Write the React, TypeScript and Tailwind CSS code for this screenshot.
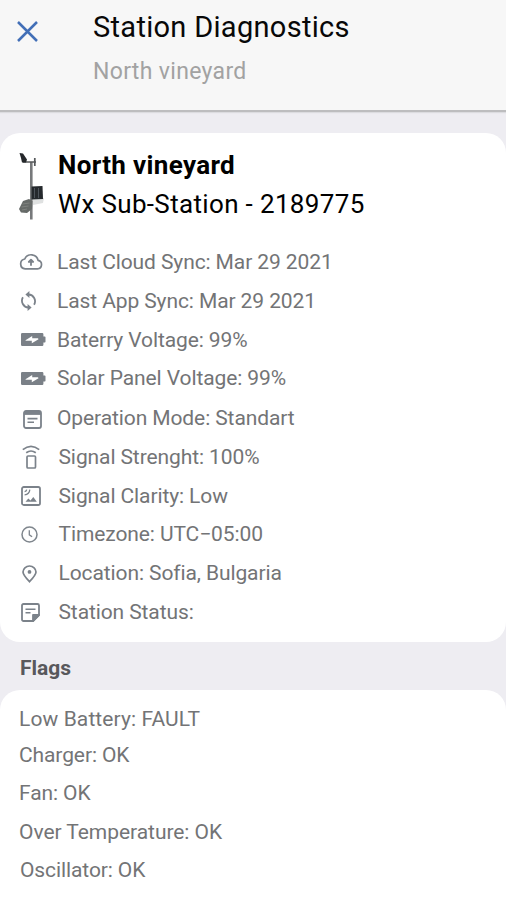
/* =============================================================
   Station Diagnostics screen
   Header, station card with device details, list of flags
   ============================================================= */

import type { ReactNode } from "react";

function CloudIcon() {
  return (
    <svg width="24" height="17" viewBox="0 0 24 17" fill="none" stroke="#7b828a" strokeWidth="1.7" strokeLinejoin="round">
      <path d="M6.2 15.9h12.3a4.3 4.3 0 0 0 .6-8.5A7 7 0 0 0 5.8 6a5 5 0 0 0 .4 9.9Z" />
      <path d="M12 12.8V7M9.8 8.9 12 6.6l2.2 2.3Z" fill="#7b828a" strokeWidth="1.8" />
    </svg>
  );
}

function SyncIcon() {
  return (
    <svg width="17" height="20" viewBox="0 0 17 20" fill="none" stroke="#7b828a" strokeWidth="1.8">
      <path d="M8.5 3.5a6.8 6.8 0 0 1 5.6 10.2M8.5 16.5A6.8 6.8 0 0 1 2.9 6.3" />
      <path d="M9.4 0v7L5.4 3.5ZM7.6 20v-7l4 3.5Z" fill="#7b828a" stroke="none" />
    </svg>
  );
}

function BatteryIcon() {
  return (
    <svg width="25" height="13" viewBox="0 0 25 13">
      <path d="M1.2 0h20a1.2 1.2 0 0 1 1.2 1.2v2.2h1.1c.7 0 1 .3 1 1v4.2c0 .7-.3 1-1 1h-1.1v2.2a1.2 1.2 0 0 1-1.2 1.2h-20A1.2 1.2 0 0 1 0 11.8V1.2A1.2 1.2 0 0 1 1.2 0Z" fill="#7a8087" />
      <path d="m4.500 7.200 6.700-4.200v2.300h5.800l.5 1-6.700 4V7.800H4.700Z" fill="#fff" />
    </svg>
  );
}

function ModeIcon() {
  return (
    <svg width="19" height="19" viewBox="0 0 19 19" fill="none" stroke="#7b828a" strokeWidth="1.8">
      <rect x="1" y="1" width="17" height="17" rx="2" />
      <path d="M1 3h17" strokeWidth="3.8" />
      <path d="M4.5 8.6h10M4.5 12.2h6.5" strokeWidth="1.6" />
    </svg>
  );
}

function SignalIcon() {
  return (
    <svg width="18" height="24" viewBox="0 0 18 24" fill="none" stroke="#7b828a" strokeWidth="1.7">
      <path d="M.8 4.6Q9-2 17.2 4.6M4.2 7.8q4.8-3.6 9.6 0" />
      <rect x="5" y="11" width="8.5" height="12" rx="1" />
    </svg>
  );
}

function ClarityIcon() {
  return (
    <svg width="20" height="20" viewBox="0 0 20 20" fill="none" stroke="#7b828a" strokeWidth="1.8">
      <rect x="1" y="1" width="18" height="18" rx="1.8" />
      <path d="M3.6 8.8q4.8-.4 5.2-5.2M3.6 5.7q1.8-.2 2.1-2.1" strokeWidth="1.3" />
      <path d="m4.5 15.8 2.8-3.4 2.2 2.2 2.8-3.6 3.5 4.8Z" fill="#7b828a" stroke="none" />
    </svg>
  );
}

function ClockIcon() {
  return (
    <svg width="17" height="17" viewBox="0 0 17 17" fill="none" stroke="#7f868d" strokeWidth="1.5">
      <circle cx="8.5" cy="8.5" r="7.5" />
      <path d="M8.3 4.2v4.6l2.8 2" strokeWidth="1.3" />
    </svg>
  );
}

function PinIcon() {
  return (
    <svg width="15" height="18" viewBox="0 0 15 18" fill="none" stroke="#7b828a" strokeWidth="1.7">
      <path d="M7.5 16.7C4 13 1 9.8 1 7a6.5 6 0 0 1 13 0c0 2.8-3 6-6.5 9.7Z" />
      <circle cx="7.5" cy="6.9" r="1.9" fill="#7b828a" stroke="none" />
    </svg>
  );
}

function NoteIcon() {
  return (
    <svg width="19" height="19" viewBox="0 0 19 19" fill="none" stroke="#7b828a" strokeWidth="1.8" strokeLinejoin="round">
      <path d="M2.5 1h14A1.5 1.5 0 0 1 18 2.5V12l-6 6H2.5A1.5 1.5 0 0 1 1 16.5v-14A1.5 1.5 0 0 1 2.5 1Z" />
      <path d="M12 18v-6h6Z" fill="#7b828a" />
      <path d="M4.5 6.2h10M4.5 9.8h5" strokeWidth="1.6" />
    </svg>
  );
}

function StationImage() {
  return (
    <svg width="30" height="72" viewBox="0 0 30 72">
      <path d="M12.3 11v57.5" stroke="#77797b" strokeWidth="2.6" />
      <path d="M4 11h13M15.8 7v8" stroke="#55585a" strokeWidth="1.7" />
      <path d="m.5 2 3.5.5 4 6-1 3H3L2 7Z" fill="#25282b" />
      <path d="m14 48 11-1-1 5-10 2Z" fill="#dfe1e1" />
      <path d="M12.5 35.5 23.5 35l.5 13-11.5.5Z" fill="#25292d" />
      <path d="M15.5 37v10M19.5 37v10" stroke="#596067" strokeWidth=".8" />
      <path d="m4 50 6-2 3.500 2-.5 8-5 4-6-.5L0 58Z" fill="#666a68" />
      <path d="m3.500 53 7-1M2.500 56l7-1M3 59l5-1" stroke="#7f827f" strokeWidth="1" />
    </svg>
  );
}

type Detail = { text: string; icon: ReactNode; row: string; iconBox: string };

const details: Detail[] = [
  { text: "Last Cloud Sync: Mar 29 2021", icon: <CloudIcon />, row: "h-[39px]", iconBox: "w-[57px] pl-[19px] pb-[2px]" },
  { text: "Last App Sync: Mar 29 2021", icon: <SyncIcon />, row: "h-[39px]", iconBox: "w-[57px] pl-[20px] pb-px" },
  { text: "Baterry Voltage: 99%", icon: <BatteryIcon />, row: "h-[39px]", iconBox: "w-[57px] pl-[21px] pb-[2px]" },
  { text: "Solar Panel Voltage: 99%", icon: <BatteryIcon />, row: "h-[38px]", iconBox: "w-[57px] pl-[21px] pb-[2px]" },
  { text: "Operation Mode: Standart", icon: <ModeIcon />, row: "h-[41px]", iconBox: "w-[57px] pl-[23px] pt-[2px]" },
  { text: "Signal Strenght: 100%", icon: <SignalIcon />, row: "h-[38px]", iconBox: "w-[58.5px] pl-[22px] pb-[2px]" },
  { text: "Signal Clarity: Low", icon: <ClarityIcon />, row: "h-[39px]", iconBox: "w-[58.5px] pl-[21px] pb-[2px]" },
  { text: "Timezone: UTC−05:00", icon: <ClockIcon />, row: "h-[38px]", iconBox: "w-[58.5px] pl-[21px] pb-[2px]" },
  { text: "Location: Sofia, Bulgaria", icon: <PinIcon />, row: "h-[39px]", iconBox: "w-[58.5px] pl-[22px]" },
  { text: "Station Status:", icon: <NoteIcon />, row: "h-[39px]", iconBox: "w-[58.5px] pl-[21px] pb-px" },
];

const flags = [
  { text: "Low Battery: FAULT", row: "h-[35px] tracking-[0.1px]" },
  { text: "Charger: OK", row: "h-[37px] tracking-[-0.1px]" },
  { text: "Fan: OK", row: "h-[39px] tracking-[-0.1px]" },
  { text: "Over Temperature: OK", row: "h-[39px] tracking-[-0.05px]" },
  { text: "Oscillator: OK", row: "h-[38px] pl-px tracking-[-0.1px]" },
];

export default function App() {
  return (
    <div className="flex h-[900px] w-[506px] flex-col overflow-hidden bg-[#eeedf2] font-['Roboto',sans-serif] text-[#737476]">
      {/* Header */}
      <header className="flex h-[112px] shrink-0 border-b-2 border-[#bdbdbf] bg-[#f7f7f7] shadow-[0_1px_1px_#dcdce0]">
        <button className="ml-[17px] mt-[21px] h-[21px] w-[21px]" aria-label="Close">
          <svg width="21" height="21" viewBox="0 0 21 21" stroke="#426fb7" strokeWidth="2.5">
            <path d="m1 1 19 19M20 1 1 20" />
          </svg>
        </button>
        <div className="ml-[55px] mt-[8px] flex flex-col whitespace-nowrap">
          <h1 className="text-[29px] leading-[39px] tracking-[0.3px] text-[#080808]">Station Diagnostics</h1>
          <p className="mt-[5px] text-[23px] leading-[40px] tracking-[0.33px] text-[#a2a2a2]">North vineyard</p>
        </div>
      </header>

      {/* Station card */}
      <section className="mt-[21px] h-[509px] shrink-0 rounded-[20px] bg-white">
        <div className="flex h-[110px]">
          <div className="ml-[19px] mt-[18px] w-[39px]">
            <StationImage />
          </div>
          <div className="mt-[13px] whitespace-nowrap text-[26px] leading-[39px] text-black">
            <h2 className="font-bold tracking-[0.34px]">North vineyard</h2>
            <p className="tracking-[0.34px]">Wx Sub-Station - 2189775</p>
          </div>
        </div>
        <ul className="text-[21px] tracking-[-0.1px]">
          {details.map((item) => (
            <li key={item.text} className={`flex items-center whitespace-nowrap ${item.row}`}>
              <span className={`shrink-0 ${item.iconBox}`}>{item.icon}</span>
              <span>{item.text}</span>
            </li>
          ))}
        </ul>
      </section>

      {/* Flags */}
      <h3 className="h-[48px] shrink-0 pl-[20px] pt-[6px] text-[21px] font-bold leading-[40px] text-[#58585c]">Flags</h3>
      <section className="h-[230px] shrink-0 rounded-t-[20px] bg-white pl-[19px] pt-[12px] text-[21px]">
        {flags.map((flag) => (
          <p key={flag.text} className={`flex items-center ${flag.row}`}>
            {flag.text}
          </p>
        ))}
      </section>
    </div>
  );
}
